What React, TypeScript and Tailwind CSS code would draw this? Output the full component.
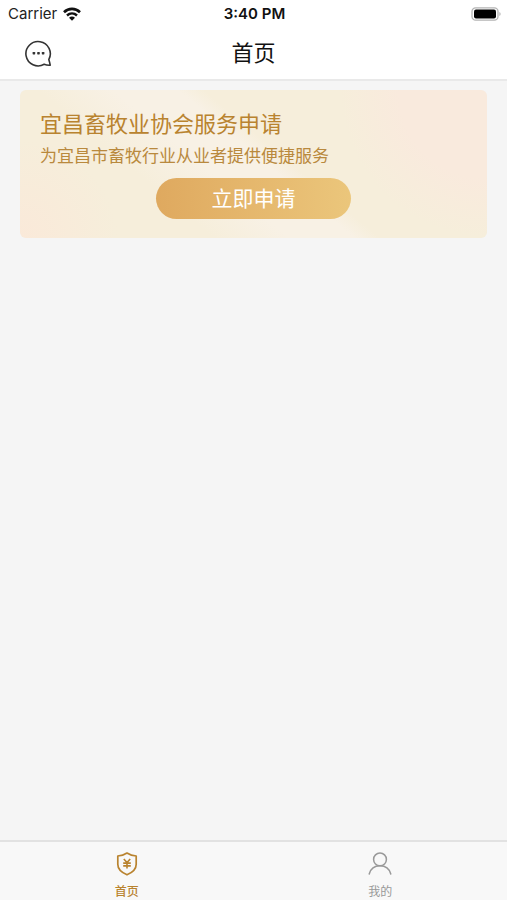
import type { ReactNode } from "react";

function WifiIcon() {
  return (
    <svg className="h-[14px] w-[18px]" viewBox="0 0 18 14" fill="none" aria-hidden="true">
      <path d="M1 5.2C5.5 0.8 12.5 0.8 17 5.2" stroke="#111" strokeWidth="2.6" />
      <path d="M4 8.5c2.9-2.7 7.1-2.7 10 0" stroke="#111" strokeWidth="2.4" />
      <path d="M9 13.8 6 10.8c1.7-1.6 4.3-1.6 6 0Z" fill="#111" />
    </svg>
  );
}

function BatteryIcon() {
  return (
    <svg className="h-[14px] w-[30px]" viewBox="0 0 30 14" fill="none" aria-hidden="true">
      <rect x="1" y="0.8" width="26" height="12.4" rx="3.6" fill="#fff" stroke="#b4b4b4" strokeWidth="1.3" />
      <rect x="3" y="2.6" width="22" height="8.8" rx="2" fill="#000" />
      <path d="M28.4 5v4c1.6-.7 1.6-3.3 0-4Z" fill="#b4b4b4" />
    </svg>
  );
}

function MessageIcon() {
  return (
    <svg className="size-7" viewBox="0 0 28 28" fill="none" aria-hidden="true">
      <path
        d="M24.8 19.6A12.2 12.2 0 1 0 20.2 24.3c1.9.8 3.8 1 6 .9-.3-1.9-.8-3.700-1.400-5.600Z"
        stroke="#333"
        strokeWidth="1.6"
        strokeLinejoin="round"
      />
      <g fill="#333">
        <rect x="8.6" y="12" width="2.6" height="2.4" rx="0.6" />
        <rect x="13.2" y="12" width="2.6" height="2.4" rx="0.6" />
        <rect x="17.8" y="12" width="2.6" height="2.4" rx="0.6" />
      </g>
    </svg>
  );
}

function ShieldIcon() {
  return (
    <svg className="size-6" viewBox="0 0 24 24" fill="none" stroke="currentColor" aria-hidden="true">
      <path
        d="M12 1c2.600 1.800 5.600 2.800 9.200 3v8.300c0 4.600-3.600 8.200-9.200 10.500-5.600-2.300-9.200-5.900-9.200-10.500V4c3.600-.2 6.600-1.200 9.200-3Z"
        strokeWidth="1.7"
        strokeLinejoin="round"
      />
      <path d="m8.800 7 3.200 3.600L15.200 7M12 10.600v6M8.200 11.100h7.600M8.200 13.900h7.600" strokeWidth="1.6" />
    </svg>
  );
}

function UserIcon() {
  return (
    <svg className="size-6" viewBox="0 0 24 24" fill="none" stroke="currentColor" strokeWidth="1.5" aria-hidden="true">
      <circle cx="12" cy="7.4" r="6.400" />
      <path d="M1.200 22C2.600 17 6.800 13.800 12 13.800S21.400 17 22.800 22" strokeLinecap="round" />
    </svg>
  );
}

function Tab({ label, active, children }: { label: string; active?: boolean; children: ReactNode }) {
  return (
    <button
      className={`flex flex-1 flex-col items-center gap-2 pt-2.5 text-xs ${
        active ? "font-medium text-[#b9832f]" : "text-[#999999]"
      }`}
    >
      {children}
      <span>{label}</span>
    </button>
  );
}

export default function App() {
  return (
    <div className="flex min-h-screen flex-col bg-[#f5f5f5] font-['Inter','Noto_Sans_CJK_SC',sans-serif]">
      <header className="border-b-2 border-[#e9e9e9] bg-white">
        {/* Status bar */}
        <div className="grid h-7 grid-cols-3 items-center pr-1.5 pl-2 text-[15px] text-[#222]">
          <div className="flex items-center gap-1.5">
            <span>Carrier</span>
            <WifiIcon />
          </div>
          <span className="text-center font-semibold text-[#111]">3:40 PM</span>
          <div className="flex justify-end">
            <BatteryIcon />
          </div>
        </div>

        {/* Nav bar */}
        <div className="grid h-[51px] grid-cols-3 items-center px-6">
          <button aria-label="消息" className="w-7">
            <MessageIcon />
          </button>
          <h1 className="text-center text-[22px] text-[#111]">首页</h1>
        </div>
      </header>

      <main className="flex-1 px-5 pt-[9px]">
        <section className="rounded-md bg-[#f6eedb] bg-[radial-gradient(circle_at_100%_0%,#f9eadd_0%,#f9eadd_18%,#f6eedb00_30%),radial-gradient(circle_at_0%_100%,#fae9d9_0%,#f6eedb00_20%),linear-gradient(40deg,#f6eedb00_30%,#f8f1e5_42%,#f8f1e5_52%,#f6eedb00_56%)] px-5 pt-5 pb-[19px]">
          <h2 className="text-[22px] leading-7 text-[#b9832f]">宜昌畜牧业协会服务申请</h2>
          <p className="mt-1.5 text-[17px] leading-6 text-[#b9893d]">为宜昌市畜牧行业从业者提供便捷服务</p>
          <button className="mx-auto mt-2.5 block h-[41px] w-[195px] rounded-full bg-linear-to-r from-[#dfa95f] to-[#ebc67b] text-[21px] text-white">
            立即申请
          </button>
        </section>
      </main>

      <nav className="flex h-[60px] border-t-2 border-[#e2e2e2] bg-[#f8f8f8]">
        <Tab label="首页" active>
          <ShieldIcon />
        </Tab>
        <Tab label="我的">
          <UserIcon />
        </Tab>
      </nav>
    </div>
  );
}
